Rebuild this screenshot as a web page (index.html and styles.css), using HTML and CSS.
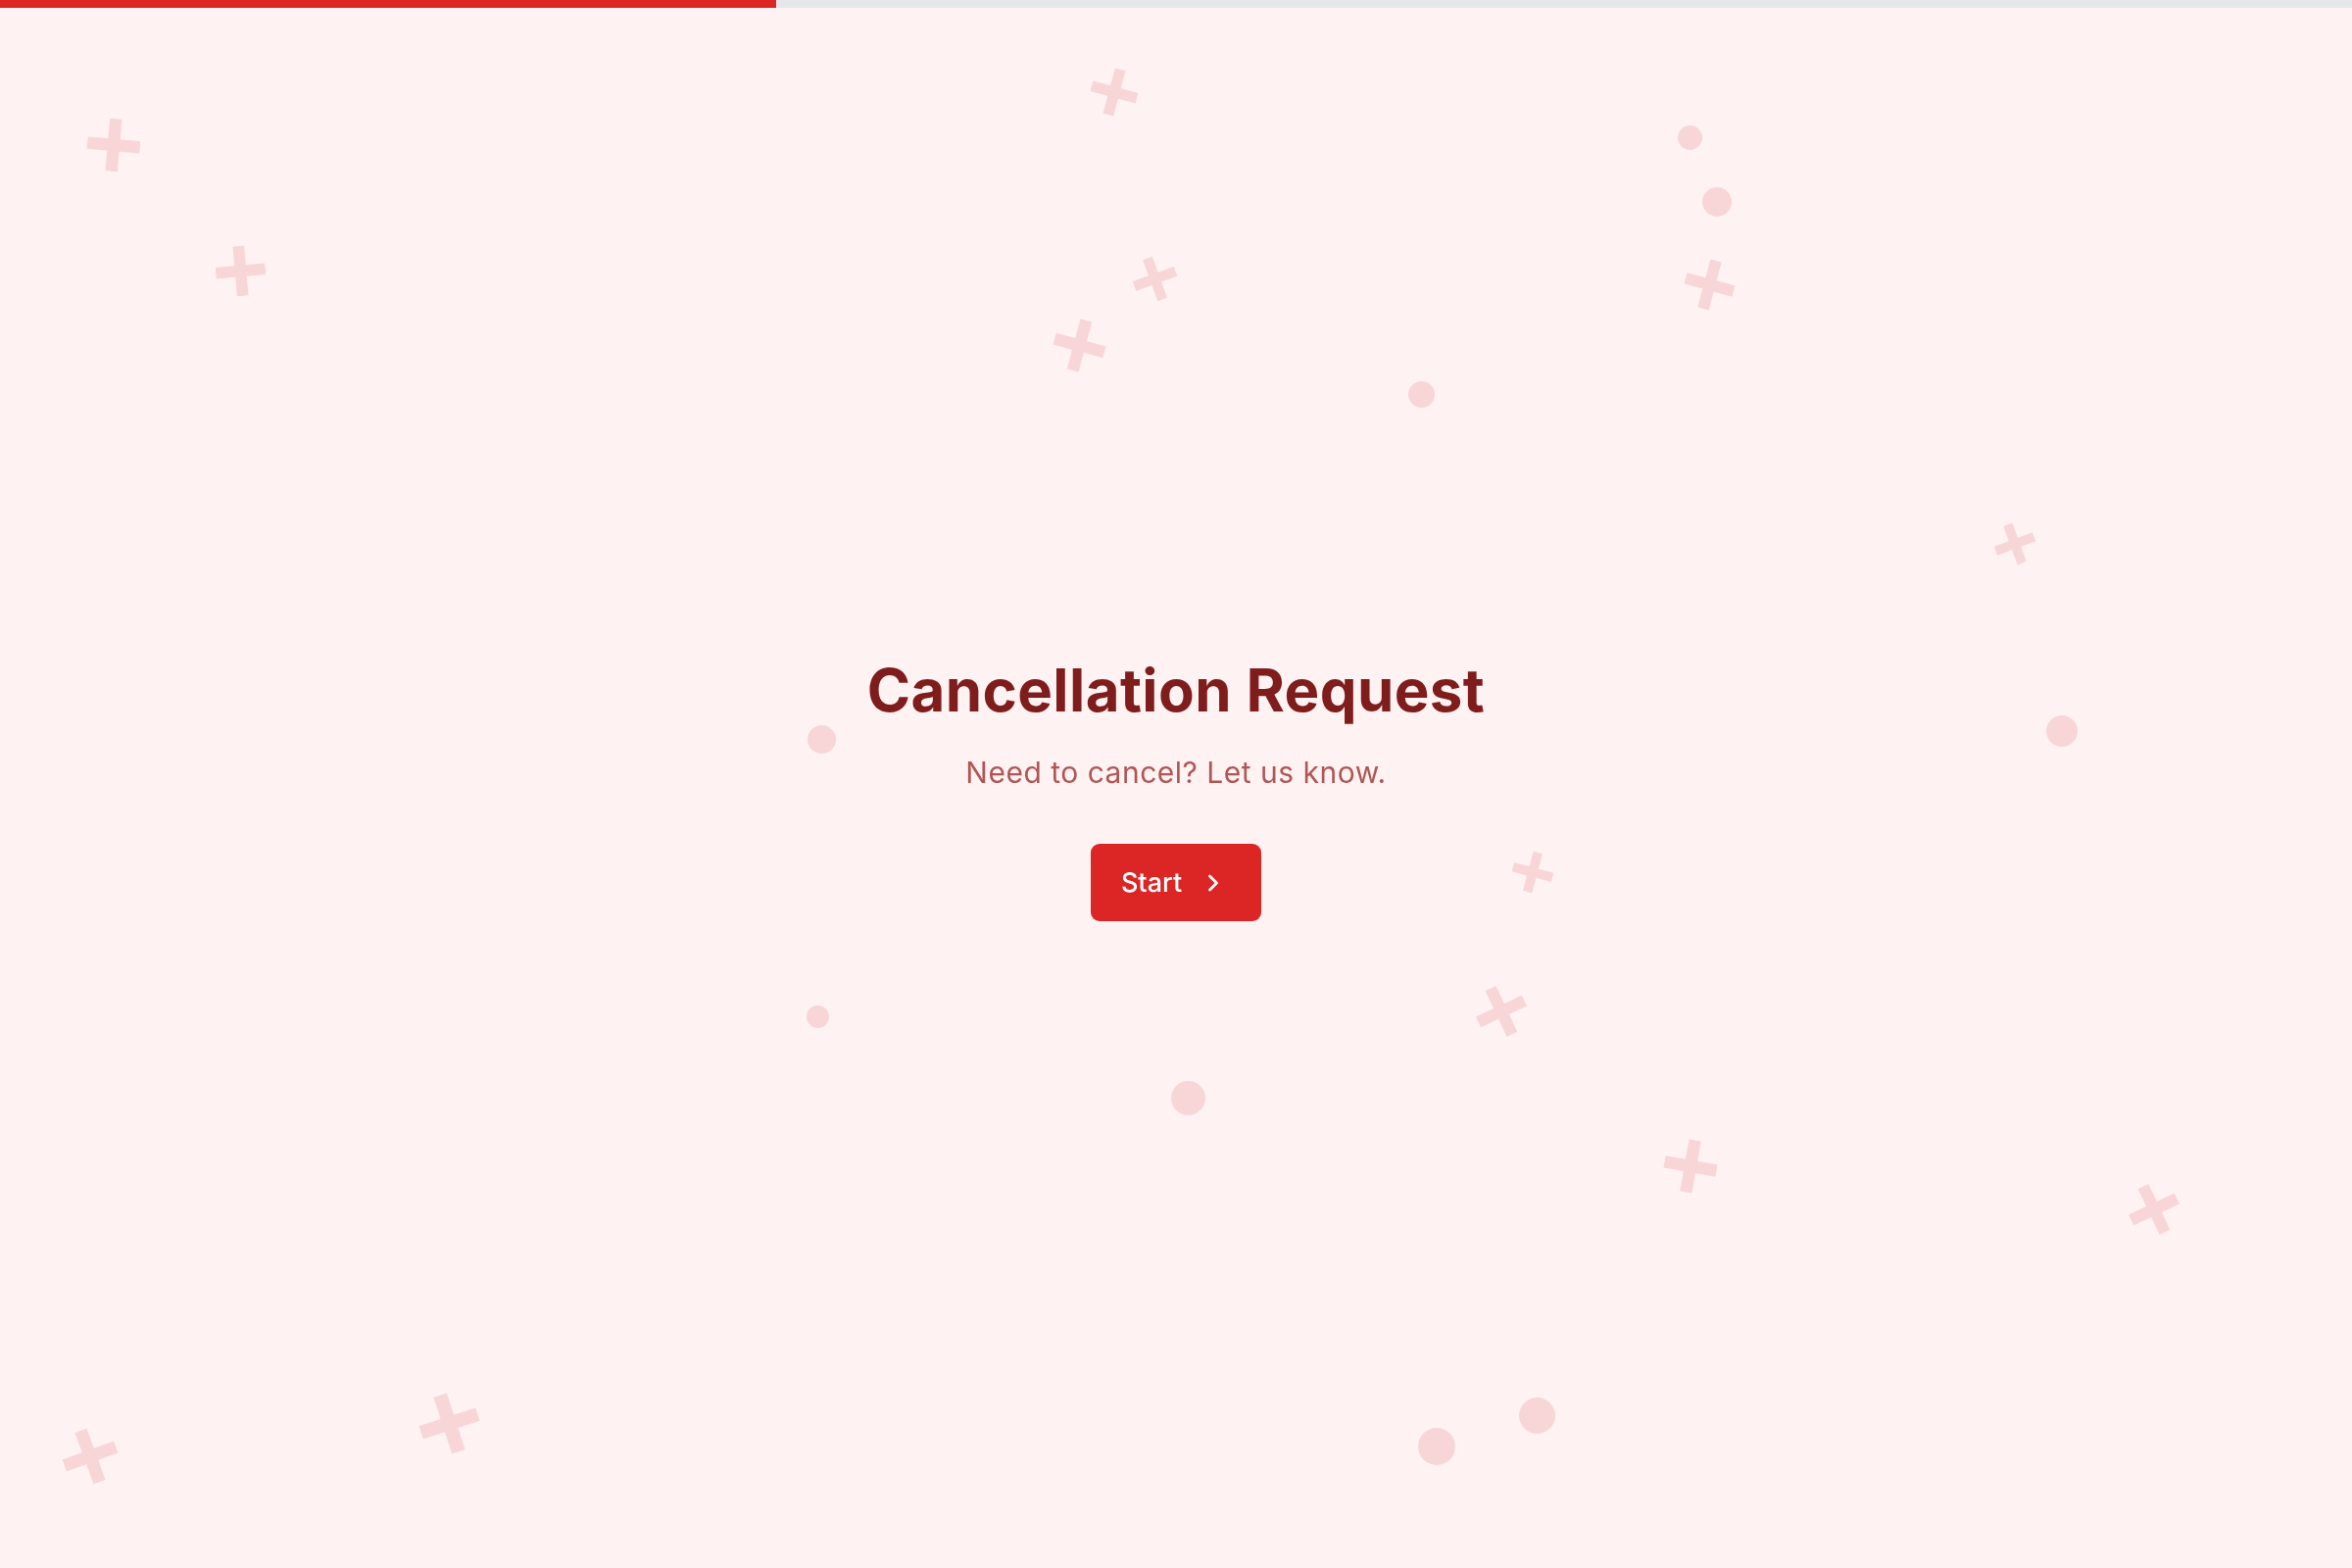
FILE: index.html
```html
<!DOCTYPE html>
<html lang="en">
<head>
    <meta charset="UTF-8">
    <title>Cancellation Request</title>
    <meta name="viewport" content="width=device-width, initial-scale=1">
    <link rel="stylesheet" href="styles.css">
</head>
<body>
<div class="progress"><div class="progress-fill"></div></div>
<div class="backdrop" id="backdrop"></div>
<main class="intro">
    <h1>Cancellation Request</h1>
    <p class="lead">Need to cancel? Let us know.</p>
    <button type="button" class="start">
        Start
        <svg viewBox="0 0 24 24" width="28" height="28" fill="none" stroke="currentColor"
             stroke-width="2.4" stroke-linecap="round" stroke-linejoin="round">
            <path d="m9 18 6-6-6-6"/>
        </svg>
    </button>
</main>
<script>
    // scattered crosses and dots behind the intro: [x, y, size, rotation]
    const crosses = [
      [116, 148, 54, 5], [245, 276, 51, -5], [1137, 94, 48, 15], [1178, 284, 45, -20],
      [1101, 352, 53, 15], [1744, 290, 51, 15], [2056, 555, 42, -20], [1564, 890, 42, 15],
      [1532, 1032, 52, -25], [1725, 1190, 54, 10], [2198, 1234, 52, -25],
      [92, 1486, 56, -20], [458, 1452, 61, -18]
    ];
    const dots = [
      [1724, 140, 25], [1752, 206, 30], [1450, 402, 27], [838, 754, 29], [2104, 746, 32],
      [834, 1037, 23], [1212, 1120, 35], [1568, 1444, 37], [1466, 1476, 38]
    ];

    const backdrop = document.getElementById('backdrop');
    const svgNs = 'http://www.w3.org/2000/svg';

    crosses.forEach(([x, y, size, rot]) => {
      const svg = document.createElementNS(svgNs, 'svg');
      svg.setAttribute('viewBox', '0 0 24 24');
      svg.setAttribute('class', 'cross');
      svg.innerHTML = '<rect x="9.25" y="0" width="5.5" height="24"/><rect x="0" y="9.25" width="24" height="5.5"/>';
      svg.style.cssText = `left:${x - size / 2}px;top:${y - size / 2}px;width:${size}px;height:${size}px;transform:rotate(${rot}deg)`;
      backdrop.appendChild(svg);
    });

    dots.forEach(([x, y, d]) => {
      const dot = document.createElement('span');
      dot.className = 'dot';
      dot.style.cssText = `left:${x - d / 2}px;top:${y - d / 2}px;width:${d}px;height:${d}px`;
      backdrop.appendChild(dot);
    });
</script>
</body>
</html>
```

FILE: styles.css
```css
body {
  margin: 0;
  background: #fef2f2;
  font-family: Inter, 'Noto Sans', Arial, sans-serif;
  min-height: 100vh;
  overflow: hidden;
}
.progress {
  height: 8px;
  background: #e5e7eb;
  position: relative;
  z-index: 2;
}
.progress-fill {
  width: 33%;
  height: 100%;
  background: #dc2626;
}
.backdrop {
  position: fixed;
  inset: 0;
  pointer-events: none;
}
.cross {
  position: absolute;
  fill: #f8d6d8;
}
.dot {
  position: absolute;
  border-radius: 50%;
  background: #f8d6d8;
}
.intro {
  position: relative;
  z-index: 1;
  min-height: calc(100vh - 8px);
  display: flex;
  flex-direction: column;
  align-items: center;
  justify-content: center;
  text-align: center;
}
h1 {
  margin: 0;
  font-size: 60px;
  line-height: 1.2;
  font-weight: 700;
  color: #7f1d1d;
  letter-spacing: 0.4px;
}
.lead {
  margin: 27px 0 0;
  font-size: 30px;
  line-height: 1.4;
  color: #b05656;
  letter-spacing: 0.5px;
}
.start {
  margin-top: 52px;
  display: inline-flex;
  align-items: center;
  gap: 18px;
  height: 79px;
  padding: 0 35px 0 31px;
  border: none;
  border-radius: 9px;
  background: #dc2626;
  color: #fff;
  font-family: inherit;
  font-size: 27px;
  font-weight: 500;
  cursor: pointer;
}
.start:hover {
  background: #c81e1e;
}
```
